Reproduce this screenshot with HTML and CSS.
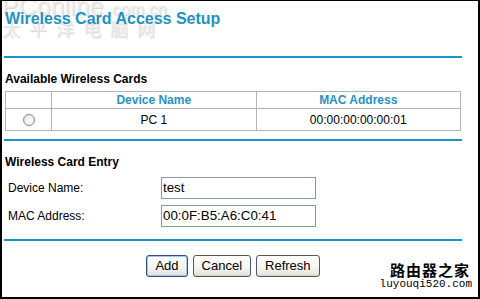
FILE: index.html
```html
<!DOCTYPE html>
<html>
<head>
<meta charset="utf-8">
<link rel="stylesheet" href="styles.css">
</head>
<body>
<div class="frame">
  <div class="wm">
    <div class="wm-top"><span class="wm-big">PConline</span><span class="wm-small">.com.cn</span></div>
    <div class="wm-cn">太平洋电脑网</div>
  </div>
  <div class="page">
    <h1 class="title">Wireless Card Access Setup</h1>
    <div class="rule rule-first"></div>
    <h2 class="section">Available Wireless Cards</h2>
    <table class="cards">
      <tr class="head">
        <th class="sel"></th>
        <th>Device Name</th>
        <th>MAC Address</th>
      </tr>
      <tr class="body">
        <td class="sel"><span class="radio"></span></td>
        <td>PC 1</td>
        <td>00:00:00:00:00:01</td>
      </tr>
    </table>
    <div class="rule rule-second"></div>
    <h2 class="section section-entry">Wireless Card Entry</h2>
    <div class="form">
      <div class="row"><span class="label">Device Name:</span><span class="input">test</span></div>
      <div class="row"><span class="label">MAC Address:</span><span class="input">00:0F:B5:A6:C0:41</span></div>
    </div>
    <div class="rule rule-third"></div>
    <div class="buttons">
      <span class="btn btn-default">Add</span>
      <span class="btn">Cancel</span>
      <span class="btn">Refresh</span>
    </div>
  </div>
  <div class="brand">
    <div class="brand-cn">路由器之家</div>
    <div class="brand-url">luyouqi520.com</div>
  </div>
</div>
</body>
</html>
```

FILE: styles.css
```css
html, body {
  margin: 0;
  padding: 0;
  background: #fff;
}
.frame {
  position: relative;
  width: 480px;
  height: 299px;
  box-sizing: border-box;
  border-top: 1px solid #000;
  border-left: 2px solid #000;
  border-right: 2px solid #000;
  border-bottom: 2px solid #000;
  font-family: "Liberation Sans", Arial, sans-serif;
  font-size: 12px;
  color: #000;
  overflow: hidden;
}
.wm {
  position: absolute;
  left: 0;
  top: -7px;
  color: #ececec;
  text-shadow: 1px 1px 1px #d4d4d4;
  z-index: 0;
}
.wm-top {
  white-space: nowrap;
  line-height: 24px;
}
.wm-big {
  font-size: 25px;
  font-family: "Liberation Sans", Arial, sans-serif;
}
.wm-small {
  font-size: 17px;
  margin-left: 4px;
}
.wm-cn {
  font-family: "Noto Sans CJK SC", sans-serif;
  font-size: 18px;
  line-height: 20px;
  letter-spacing: 9px;
  margin-top: -5px;
}
.page {
  position: relative;
  z-index: 1;
  margin-left: 2px;
  width: 458px;
}
.title {
  margin: 9px 0 0 1px;
  font-size: 16px;
  line-height: 18px;
  font-weight: bold;
  color: #1f92c3;
}
.rule {
  height: 2px;
  background: #1996c5;
}
.rule-first { margin-top: 28px; }
.rule-second { margin-top: 8px; }
.rule-third { margin-top: 12px; }
.section {
  margin: 14px 0 0 1px;
  font-size: 12px;
  line-height: 14px;
  font-weight: bold;
}
.cards {
  margin: 5px 0 0 1px;
  width: 456px;
  border-collapse: collapse;
  table-layout: fixed;
  border: 1px solid #b4b4b4;
}
.cards th, .cards td {
  border: 1px solid #b4b4b4;
  padding: 0;
  text-align: center;
  font-size: 12px;
}
.cards .sel { width: 45px; }
.cards .head th {
  height: 16px;
  line-height: 14px;
  color: #2593c4;
  font-weight: bold;
}
.cards .body td {
  height: 21px;
  line-height: 14px;
}
.radio {
  display: inline-block;
  width: 10px;
  height: 10px;
  border: 1px solid #7d8a96;
  border-radius: 50%;
  background: radial-gradient(circle at 60% 60%, #ffffff 0%, #eef0f2 50%, #cfd3d8 100%);
  vertical-align: middle;
}
.section-entry { margin-top: 14px; }
.form {
  margin-top: 8px;
  display: flex;
  flex-direction: column;
  gap: 6px;
}
.row {
  display: flex;
  align-items: center;
  height: 22px;
}
.label {
  width: 153px;
  padding-left: 4px;
}
.input {
  box-sizing: border-box;
  width: 155px;
  height: 22px;
  border: 1px solid #8499ac;
  padding: 0 0 0 1px;
  font-size: 13.33px;
  line-height: 20px;
}
.buttons {
  margin-top: 14px;
  display: flex;
  justify-content: center;
  gap: 5px;
}
.btn {
  box-sizing: border-box;
  height: 22px;
  padding: 0 8px;
  border: 1px solid #4d5a66;
  border-radius: 3px;
  background: linear-gradient(#ffffff, #f4f4f0 60%, #e2e0d6);
  font-size: 13px;
  line-height: 20px;
  box-shadow: inset 0 -1px 0 #d6d3c6;
}
.btn-default {
  border-color: #2b4f86;
  box-shadow: inset 0 0 0 1px #a7c3ee;
}
.brand {
  position: absolute;
  right: 6px;
  bottom: 7px;
  text-align: right;
}
.brand-cn {
  font-family: "Noto Sans CJK SC", sans-serif;
  font-weight: bold;
  font-size: 15px;
  line-height: 16px;
  letter-spacing: 1px;
  margin-right: 2px;
}
.brand-url {
  font-family: "Liberation Mono", monospace;
  font-size: 11px;
  line-height: 12px;
}
```
